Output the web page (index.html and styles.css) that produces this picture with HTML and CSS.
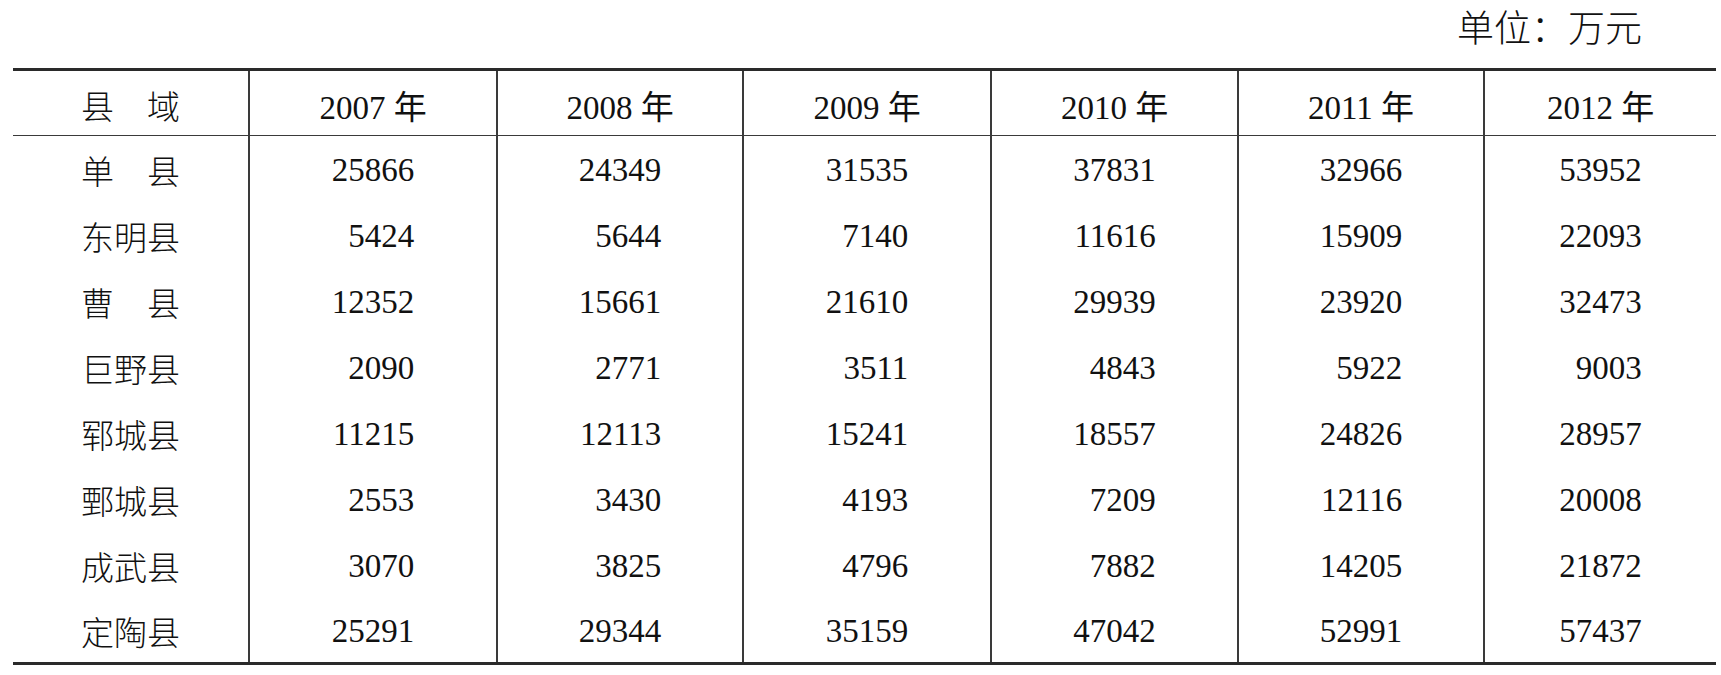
FILE: index.html
```html
<!DOCTYPE html>
<html lang="zh-CN">
<head>
    <meta charset="UTF-8">
    <title>县域数据</title>
    <link rel="stylesheet" href="styles.css">
</head>
<body>
    <div class="unit">单位：万元</div>
    <table class="data">
        <colgroup>
            <col class="c-name">
            <col class="c2">
            <col class="c3">
            <col class="c4">
            <col class="c5">
            <col class="c6">
            <col class="c7">
        </colgroup>
        <thead>
            <tr>
                <th>县　域</th>
                <th>2007 年</th>
                <th>2008 年</th>
                <th>2009 年</th>
                <th>2010 年</th>
                <th>2011 年</th>
                <th>2012 年</th>
            </tr>
        </thead>
        <tbody>
            <tr><td>单　县</td><td><span class="num">25866</span></td><td><span class="num">24349</span></td><td><span class="num">31535</span></td><td><span class="num">37831</span></td><td><span class="num">32966</span></td><td><span class="num">53952</span></td></tr>
            <tr><td>东明县</td><td><span class="num">5424</span></td><td><span class="num">5644</span></td><td><span class="num">7140</span></td><td><span class="num">11616</span></td><td><span class="num">15909</span></td><td><span class="num">22093</span></td></tr>
            <tr><td>曹　县</td><td><span class="num">12352</span></td><td><span class="num">15661</span></td><td><span class="num">21610</span></td><td><span class="num">29939</span></td><td><span class="num">23920</span></td><td><span class="num">32473</span></td></tr>
            <tr><td>巨野县</td><td><span class="num">2090</span></td><td><span class="num">2771</span></td><td><span class="num">3511</span></td><td><span class="num">4843</span></td><td><span class="num">5922</span></td><td><span class="num">9003</span></td></tr>
            <tr><td>郓城县</td><td><span class="num">11215</span></td><td><span class="num">12113</span></td><td><span class="num">15241</span></td><td><span class="num">18557</span></td><td><span class="num">24826</span></td><td><span class="num">28957</span></td></tr>
            <tr><td>鄄城县</td><td><span class="num">2553</span></td><td><span class="num">3430</span></td><td><span class="num">4193</span></td><td><span class="num">7209</span></td><td><span class="num">12116</span></td><td><span class="num">20008</span></td></tr>
            <tr><td>成武县</td><td><span class="num">3070</span></td><td><span class="num">3825</span></td><td><span class="num">4796</span></td><td><span class="num">7882</span></td><td><span class="num">14205</span></td><td><span class="num">21872</span></td></tr>
            <tr><td>定陶县</td><td><span class="num">25291</span></td><td><span class="num">29344</span></td><td><span class="num">35159</span></td><td><span class="num">47042</span></td><td><span class="num">52991</span></td><td><span class="num">57437</span></td></tr>
        </tbody>
    </table>
</body>
</html>
```

FILE: styles.css
```css
body {
    margin: 0;
    background-color: #ffffff;
    color: #111111;
    font-family: "Liberation Serif", "Noto Sans CJK SC", serif;
}
.unit {
    height: 68px;
    box-sizing: border-box;
    padding: 4px 79px 0 0;
    text-align: right;
    font-size: 37px;
    line-height: 44px;
    font-family: "Noto Sans CJK SC", sans-serif;
    font-weight: 300;
}
.data {
    margin-left: 13px;
    width: 1703px;
    table-layout: fixed;
    border-collapse: collapse;
    border-top: 3px solid #2a2a2a;
    border-bottom: 3px solid #2a2a2a;
    font-size: 33px;
}
.c-name { width: 236px; }
.c2 { width: 248px; }
.c3 { width: 246px; }
.c4 { width: 248px; }
.c5 { width: 247px; }
.c6 { width: 246px; }
.c7 { width: 232px; }
th,
td {
    padding: 3px 0 0;
    text-align: center;
    font-weight: normal;
    border-left: 2px solid #3a3a3a;
}
th:first-child,
td:first-child {
    border-left: none;
    font-family: "Noto Sans CJK SC", sans-serif;
    font-weight: 300;
    font-size: 33px;
}
thead tr {
    height: 66px;
}
thead th {
    border-bottom: 1px solid #3a3a3a;
}
tbody tr {
    height: 66px;
}
.num {
    display: inline-block;
    width: 2.5em;
    text-align: right;
}
```
